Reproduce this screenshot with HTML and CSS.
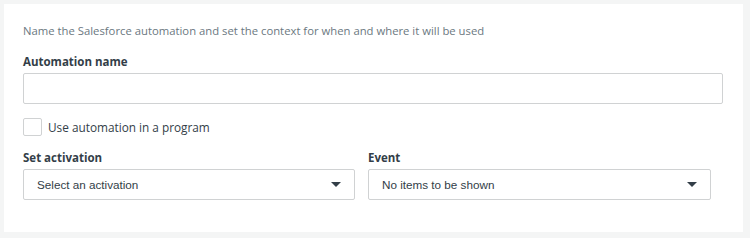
FILE: index.html
```
<!DOCTYPE html>
<html lang="en">
<head>
	<meta charset="UTF-8" />
	<title>Automation</title>
	<link rel="stylesheet" href="styles.css">
</head>
<body>
	<div class="card">
		<p class="intro">Name the Salesforce automation and set the context for when and where it will be used</p>
		<label class="field-label">Automation name</label>
		<div class="text-input"></div>
		<div class="check-row">
			<span class="check-box"></span>
			<span class="check-text">Use automation in a program</span>
		</div>
		<div class="selects">
			<div class="select-col">
				<label class="field-label">Set activation</label>
				<div class="select">
					<span>Select an activation</span>
					<span class="arrow"></span>
				</div>
			</div>
			<div class="select-col">
				<label class="field-label">Event</label>
				<div class="select">
					<span>No items to be shown</span>
					<span class="arrow"></span>
				</div>
			</div>
		</div>
	</div>
</body>
</html>
```
FILE: styles.css
```
body {
	margin: 0;
	padding: 4px 0 0 4px;
	background-color: #f4f5f5;
	font-family: "Open Sans", sans-serif;
}

.card {
	box-sizing: border-box;
	width: 739px;
	height: 228px;
	background-color: #fff;
	padding: 19px 20px 0 19px;
}

.intro {
	margin: 0;
	font-size: 11.3px;
	line-height: 16px;
	color: #6b787f;
}

.field-label {
	display: block;
	margin-top: 15px;
	font-size: 11.5px;
	font-weight: 700;
	line-height: 16px;
	color: #333e48;
}

.text-input {
	box-sizing: border-box;
	margin-top: 3px;
	width: 700px;
	height: 31px;
	border: 1px solid #d0d2d3;
	border-radius: 2px;
}

.check-row {
	display: flex;
	align-items: center;
	gap: 6px;
	margin-top: 14px;
	height: 18px;
}

.check-box {
	box-sizing: border-box;
	width: 19px;
	height: 18px;
	border: 1px solid #d0d2d3;
	border-radius: 2px;
}

.check-text {
	font-size: 11.8px;
	color: #333e48;
}

.selects {
	display: grid;
	grid-template-columns: 332px 343px;
	column-gap: 13px;
}

.selects .field-label {
	margin-top: 14px;
}

.select {
	box-sizing: border-box;
	display: flex;
	align-items: center;
	justify-content: space-between;
	margin-top: 3px;
	height: 31px;
	padding: 0 13px;
	border: 1px solid #d0d2d3;
	border-radius: 2px;
	font-family: "Liberation Sans", Arial, sans-serif;
	font-size: 11.7px;
	color: #333e48;
}

.arrow {
	width: 0;
	height: 0;
	border-left: 5px solid transparent;
	border-right: 5px solid transparent;
	border-top: 5px solid #333e48;
}
```
